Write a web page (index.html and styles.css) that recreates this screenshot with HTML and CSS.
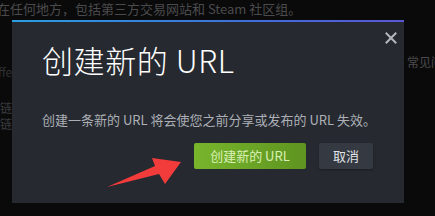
FILE: index.html
```html
<!DOCTYPE html>
<html lang="zh">
<head>
<meta charset="utf-8">
<link rel="stylesheet" href="styles.css">
</head>
<body>
<div class="page">
  <p class="bg-line">在任何地方，包括第三方交易网站和 Steam 社区组。</p>
  <div class="bg-row">
    <div class="bg-left">
      <span class="frag frag-ffe">ffe</span>
      <span class="frag frag-a">链</span>
      <span class="frag frag-b">链</span>
    </div>
    <span class="frag frag-right">常见问</span>
  </div>
</div>

<div class="modal">
  <div class="close">
    <svg width="12" height="12" viewBox="0 0 12 12"><path d="M1.5 1.5 L10.5 10.5 M10.5 1.5 L1.5 10.5" stroke="#b4b7bb" stroke-width="2" stroke-linecap="square"/></svg>
  </div>
  <h1 class="title">创建新的 URL</h1>
  <p class="desc">创建一条新的 URL 将会使您之前分享或发布的 URL 失效。</p>
  <div class="actions">
    <button class="btn btn-primary">创建新的 URL</button>
    <button class="btn btn-cancel">取消</button>
  </div>
</div>

<svg class="arrow" width="435" height="216" viewBox="0 0 435 216">
  <polygon points="107,187 155,166 152,158 181,162 165,184 159,174" fill="#f23b3b"/>
</svg>
</body>
</html>
```
FILE: styles.css
```css
html, body {
  margin: 0;
  padding: 0;
  width: 435px;
  height: 216px;
  overflow: hidden;
  background: #0a0a0b;
  font-family: "Noto Sans CJK SC", "Noto Sans", sans-serif;
}
.page {
  display: flex;
  flex-direction: column;
}
.bg-line {
  margin: 0;
  padding: 1px 0 0 0;
  margin-left: -3px;
  font-size: 13px;
  line-height: 16px;
  color: #4a4b4d;
  white-space: nowrap;
}
.bg-row {
  display: flex;
  justify-content: space-between;
  padding-top: 38px;
}
.bg-left {
  display: flex;
  flex-direction: column;
  padding-top: 10px;
}
.frag {
  font-size: 12px;
  line-height: 14px;
  color: #3b3c3e;
  white-space: nowrap;
}
.frag-ffe { margin-left: -2px; color: #2e2f31; }
.frag-a { margin-top: 22px; }
.frag-b { margin-top: 2px; }
.frag-right {
  margin-right: -8px;
  color: #4a4b4d;
}

.modal {
  position: absolute;
  left: 12px;
  top: 20px;
  width: 392px;
  height: 183px;
  box-sizing: border-box;
  background: #262930;
  border-top: 2px solid #2f8fd6;
  border-image: linear-gradient(to right, #2a9ee0, #3f6fd8 60%, #5b56d6) 1;
  border-left: 0; border-right: 0; border-bottom: 0;
  padding: 17px 31px 0 30px;
  display: flex;
  flex-direction: column;
}
.close {
  position: absolute;
  right: 7px;
  top: 10px;
  width: 12px;
  height: 12px;
  display: flex;
}
.title {
  margin: 0;
  font-size: 31px;
  font-weight: 300;
  line-height: 42px;
  color: #ffffff;
  letter-spacing: 0.6px;
}
.desc {
  margin: 0;
  margin-top: 30px;
  font-size: 13px;
  line-height: 17px;
  color: #acb0b6;
  white-space: nowrap;
}
.actions {
  display: flex;
  justify-content: flex-end;
  gap: 13px;
  margin-top: 15px;
}
.btn {
  border: 0;
  border-radius: 2px;
  box-sizing: border-box;
  height: 26px;
  padding: 0;
  font-family: inherit;
  font-size: 13px;
  line-height: 26px;
  flex: none;
}
.btn-primary {
  width: 112px;
  background: linear-gradient(to right, #78b52c, #5e9420);
  color: #d9f0b4;
}
.btn-cancel {
  width: 54px;
  background: #353942;
  color: #e0e3e6;
  box-shadow: 0 1px 2px rgba(0,0,0,0.3);
}
.arrow {
  position: absolute;
  left: 0;
  top: 0;
  pointer-events: none;
}
```
